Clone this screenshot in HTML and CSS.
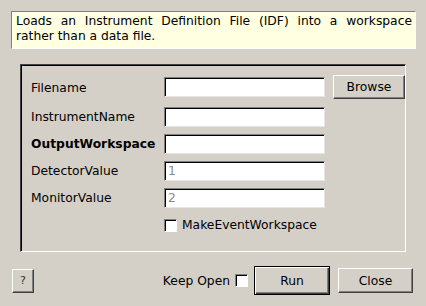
FILE: index.html
```html
<!DOCTYPE html>
<html lang="en">
<head>
    <meta charset="UTF-8">
    <title>LoadEmptyInstrument</title>
    <link rel="stylesheet" href="styles.css">
</head>
<body>
    <div class="dialog">
        <p class="descricao">Loads an Instrument Definition File (IDF) into a workspace rather than a data file.</p>
        <section class="grupo">
            <label class="rotulo">Filename</label>
            <input type="text" class="campo primeiro">
            <button class="botao browse">Browse</button>

            <label class="rotulo">InstrumentName</label>
            <input type="text" class="campo">
            <span></span>

            <label class="rotulo obrigatorio">OutputWorkspace</label>
            <input type="text" class="campo">
            <span></span>

            <label class="rotulo">DetectorValue</label>
            <input type="text" class="campo" placeholder="1">
            <span></span>

            <label class="rotulo">MonitorValue</label>
            <input type="text" class="campo" placeholder="2">
            <span></span>

            <span></span>
            <label class="marca"><span class="caixa"></span>MakeEventWorkspace</label>
            <span></span>
        </section>
        <footer class="rodape">
            <button class="botao ajuda">?</button>
            <label class="manter">Keep Open <span class="caixa"></span></label>
            <button class="botao run">Run</button>
            <button class="botao close">Close</button>
        </footer>
    </div>
</body>
</html>
```

FILE: styles.css
```css
body {
    margin: 0px;
    background-color: #d4d0c8;
    font-family: "DejaVu Sans", sans-serif;
    font-size: 12.3px;
    color: #000000;
}
.dialog {
    display: flex;
    flex-direction: column;
    width: 426px;
    height: 306px;
}
.descricao {
    margin: 11px 0px 0px 11px;
    width: 396px;
    height: 32px;
    padding: 2px 3px 2px 4px;
    background-color: #ffffe1;
    border-top: 1px solid #808080;
    border-left: 1px solid #808080;
    border-right: 1px solid #ffffff;
    border-bottom: 1px solid #ffffff;
    text-align: justify;
    line-height: 15px;
}
.grupo {
    display: grid;
    grid-template-columns: 125px 161px 72px;
    grid-template-rows: 25px 20px 20px 20px 20px 20px;
    column-gap: 8px;
    row-gap: 7px;
    align-items: center;
    margin: 15px 0px 0px 20px;
    width: 374px;
    height: 166px;
    padding: 10px 0px 10px 10px;
    border-top: 1px solid #404040;
    border-left: 1px solid #404040;
    border-right: 1px solid #ffffff;
    border-bottom: 1px solid #ffffff;
    box-shadow: inset 1px 1px 0px #000000;
}
.rotulo {
    white-space: nowrap;
}
.obrigatorio {
    font-weight: bold;
}
.campo {
    box-sizing: border-box;
    width: 161px;
    height: 20px;
    margin: 0px;
    padding: 1px 3px;
    font-family: "DejaVu Sans", sans-serif;
    font-size: 12.3px;
    background-color: #ffffff;
    border-top: 1px solid #808080;
    border-left: 1px solid #808080;
    border-right: 1px solid #e8e6e2;
    border-bottom: 1px solid #e8e6e2;
    box-shadow: inset 1px 1px 0px #000000;
    outline: none;
}
.campo.primeiro {
    align-self: start;
    margin-top: 2px;
}
.campo::placeholder {
    color: #8a8a8a;
}
.botao {
    box-sizing: border-box;
    margin: 0px;
    padding: 0px;
    font-family: "DejaVu Sans", sans-serif;
    font-size: 12.3px;
    color: #000000;
    background-color: #d4d0c8;
    border-top: 1px solid #ffffff;
    border-left: 1px solid #ffffff;
    border-right: 1px solid #404040;
    border-bottom: 1px solid #404040;
    box-shadow: inset -1px -1px 0px #808080;
}
.browse {
    align-self: start;
    width: 72px;
    height: 24px;
}
.marca {
    display: flex;
    align-items: center;
    gap: 5px;
    white-space: nowrap;
}
.caixa {
    display: inline-block;
    box-sizing: border-box;
    width: 13px;
    height: 13px;
    background-color: #ffffff;
    border-top: 1px solid #808080;
    border-left: 1px solid #808080;
    border-right: 1px solid #ffffff;
    border-bottom: 1px solid #ffffff;
    box-shadow: inset 1px 1px 0px #000000;
}
.rodape {
    display: flex;
    align-items: center;
    margin: 14px 0px 0px 12px;
    height: 29px;
}
.ajuda {
    width: 22px;
    height: 24px;
    font-size: 11px;
    color: #303030;
}
.manter {
    display: flex;
    align-items: center;
    gap: 5px;
    margin-left: auto;
    white-space: nowrap;
}
.run {
    width: 76px;
    height: 29px;
    margin-left: 6px;
    border: 1px solid #000000;
    box-shadow: inset 1px 1px 0px #ffffff, inset -1px -1px 0px #404040, inset -2px -2px 0px #808080;
}
.close {
    width: 75px;
    height: 25px;
    margin: 0px 13px 0px 8px;
}
```
